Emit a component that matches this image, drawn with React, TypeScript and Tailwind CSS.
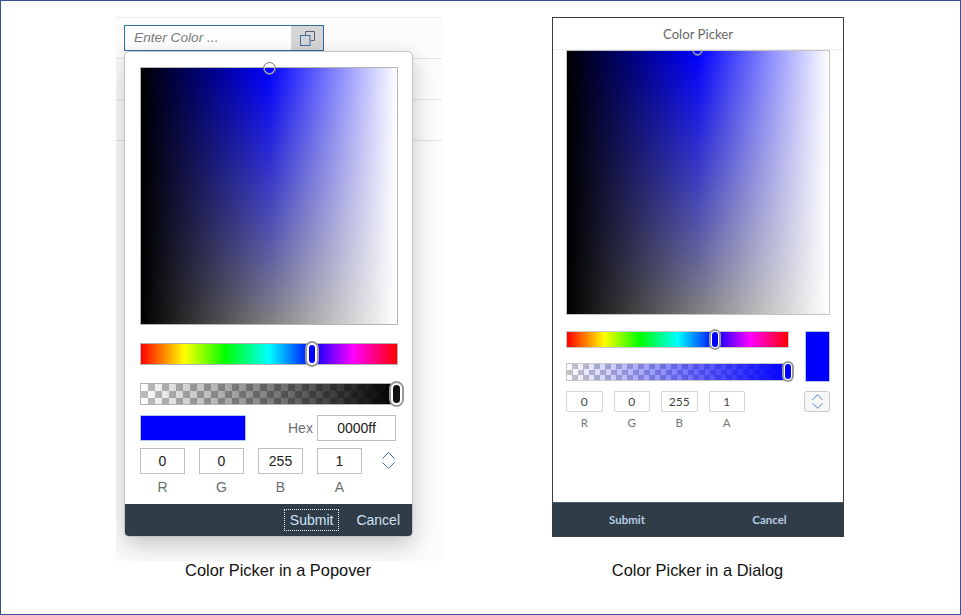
function Field({ className, handle }: { className: string; handle: string }) {
  return (
    <div className={`relative ${className}`}>
      <div className="h-full w-full bg-[linear-gradient(to_right,#000,#00f_50%,#fff)]" />
      <div className="absolute inset-0 bg-[linear-gradient(to_right,#000,#808080_50%,#fff)] [mask-image:linear-gradient(to_bottom,transparent,black)]" />
      <div className={`absolute rounded-full border border-[#777] shadow-[inset_0_0_0_1px_rgba(255,255,255,0.7)] ${handle}`} />
    </div>
  );
}

function Thumb({ className, fill, pad }: { className: string; fill: string; pad: string }) {
  return (
    <div className={`absolute rounded-full border-2 border-[#999] bg-white ${pad} ${className}`}>
      <div className={`h-full w-full rounded-full ${fill}`} />
    </div>
  );
}

function Chevrons({ size }: { size: number }) {
  return (
    <svg width={size} height={size + 4} viewBox="0 0 13 17" fill="none">
      <path d="M.5 6.5l6-6 6 6" stroke="#2f6cb5" strokeWidth="1" />
      <path d="M.5 10.5l6 6 6-6" stroke="#3f72b0" strokeWidth="1" />
    </svg>
  );
}

const FIELDS = [
  ["0", "R"],
  ["0", "G"],
  ["255", "B"],
  ["1", "A"],
];

function PopoverPicker() {
  return (
    <div className="absolute left-[8px] top-[35px] flex h-[486px] w-[289px] flex-col overflow-hidden rounded-[5px] border border-[#c4c4c4] bg-white shadow-[0_8px_24px_rgba(0,0,0,0.22)]">
      <div className="flex flex-1 flex-col px-[15px] pt-[15px]">
        <Field className="h-[258px] w-[258px] border border-[#b5b5b5]" handle="left-[122px] top-[-6px] h-[13px] w-[13px]" />
        <div className="relative mt-[18px] h-[22px] w-[258px] border border-[#b5b5b5] bg-[linear-gradient(to_right,#f00,#ff0_17%,#0f0_33%,#0ff_50%,#00f_67%,#f0f_83%,#f00)]">
          <Thumb className="left-[164px] top-[-3px] h-[26px] w-[14px]" fill="bg-[#0000ff]" pad="p-[2px]" />
        </div>
        <div className="relative mt-[18px] h-[22px] w-[258px] border border-[#b5b5b5] bg-[repeating-conic-gradient(#bdbdbd_0_25%,#ffffff_0_50%)] bg-[length:14px_14px]">
          <div className="absolute inset-0 bg-[linear-gradient(to_right,rgba(0,0,0,0),#000)]" />
          <Thumb className="left-[248px] top-[-3px] h-[26px] w-[15px]" fill="bg-[#111]" pad="p-[2px]" />
        </div>
        <div className="mt-[10px] flex items-center">
          <div className="h-[26px] w-[106px] border border-[#b5c5ee] bg-[#0000ff]" />
          <span className="ml-[42px] w-[29px] text-[14px] text-[#6a6d70]">Hex</span>
          <div className="flex h-[26px] w-[79px] items-center justify-center border border-[#bfbfbf] text-[14px] text-[#222]">
            0000ff
          </div>
        </div>
        <div className="mt-[7px] flex items-start gap-[14px]">
          {FIELDS.map(([v, l]) => (
            <div key={l} className="flex w-[45px] flex-col items-center">
              <div className="flex h-[26px] w-[45px] items-center justify-center border border-[#bfbfbf] text-[14px] text-[#222]">
                {v}
              </div>
              <span className="mt-[3px] text-[14px] leading-[20px] text-[#6a6d70]">{l}</span>
            </div>
          ))}
          <div className="ml-[6px] mt-[4px] flex">
            <Chevrons size={13} />
          </div>
        </div>
      </div>
      <div className="flex h-[32px] items-center justify-end bg-[#303c47] text-[14px] text-[#cfe3f5]">
        <span className="mr-[17px] border border-dotted border-white px-[5px] py-[1px] leading-[18px]">Submit</span>
        <span className="mr-[12px]">Cancel</span>
      </div>
    </div>
  );
}

function DialogPicker() {
  return (
    <div className="flex h-[520px] w-[292px] flex-col border border-[#3c3c3c] bg-white">
      <div className="flex h-[32px] items-center justify-center border-b border-[#ededed] pt-[3px] font-['Lato',sans-serif] text-[13.2px] text-[#666]">
        Color Picker
      </div>
      <div className="flex-1 px-[13px]">
        <Field
          className="h-[265px] w-[264px] overflow-hidden border border-[#c4c4c4]"
          handle="left-[125px] top-[-6px] h-[11px] w-[11px]"
        />
        <div className="mt-[16px] flex">
          <div className="w-[223px]">
            <div className="relative h-[17px] border border-[#c8c8c8] bg-[linear-gradient(to_right,#f00,#ff0_17%,#0f0_33%,#0ff_50%,#00f_67%,#f0f_83%,#f00)]">
              <Thumb className="left-[142px] top-[-3px] h-[21px] w-[12px]" fill="bg-[#0000ff]" pad="p-[1px]" />
            </div>
            <div className="relative mt-[15px] h-[18px] border border-[#c8c8c8] bg-[repeating-conic-gradient(#c4c4c4_0_25%,#ffffff_0_50%)] bg-[length:11px_11px]">
              <div className="absolute inset-0 bg-[linear-gradient(to_right,rgba(0,0,255,0),#00f)]" />
              <Thumb className="left-[215px] top-[-3px] h-[21px] w-[12px]" fill="bg-[#0000ff]" pad="p-[1px]" />
            </div>
          </div>
          <div className="ml-[16px] h-[51px] w-[25px] border border-[#b5c5ee] bg-[#0000ff]" />
        </div>
        <div className="mt-[9px] flex items-start gap-[11px]">
          {FIELDS.map(([v, l]) => (
            <div key={l} className="flex w-[36.5px] flex-col items-center">
              <div className="flex h-[21px] w-full items-center justify-center rounded-[1px] border border-[#d4d4d4] font-['Lato',sans-serif] text-[12px] text-[#444]">
                {v}
              </div>
              <span className="mt-[4px] font-['Lato',sans-serif] text-[11.5px] leading-[14px] text-[#777]">{l}</span>
            </div>
          ))}
          <div className="ml-[48px] flex h-[21px] w-[26px] shrink-0 items-center justify-center rounded-[3px] border border-[#c8c8c8] bg-[#f7f7f7]">
            <Chevrons size={11} />
          </div>
        </div>
      </div>
      <div className="flex h-[34px] items-center border-t border-[#4f5f6e] bg-[#303c47] font-['Lato',sans-serif] text-[11.5px] font-bold text-[#b6cde2]">
        <span className="w-[148px] text-center">Submit</span>
        <span className="w-[137px] text-center">Cancel</span>
      </div>
    </div>
  );
}

export default function App() {
  return (
    <div className="flex h-[615px] w-[961px] border border-[#2f5597] bg-white font-['Liberation_Sans',sans-serif]">
      <div className="ml-[115px] mt-[15px] flex w-[326px] flex-col">
        <div className="relative h-[545px] overflow-hidden bg-[#fcfcfc]">
          <div className="mt-[1px] h-[1px] bg-[#ebebeb]" />
          <div className="mt-[40px] h-[1px] bg-[#e4e4e4]" />
          <div className="mt-[40px] h-[1px] bg-[#e4e4e4]" />
          <div className="mt-[40px] h-[1px] bg-[#e0e0e0]" />
          <div className="absolute left-[8px] top-[9px] flex h-[26px] w-[200px] items-center border border-[#2e6c9e] bg-white">
            <span className="flex-1 pl-[9px] pt-[1px] text-[13.7px] italic text-[#7b7b7b]">Enter Color ...</span>
            <div className="flex h-full w-[32px] items-center justify-center bg-[#d6d6d6]">
              <svg width="15" height="15" viewBox="0 0 15 15" fill="none">
                <path d="M5.5 4V.5h9v9H11" stroke="#5f5f80" />
                <rect x=".5" y="4.5" width="9.5" height="10" stroke="#3a6ea5" />
              </svg>
            </div>
          </div>
          <PopoverPicker />
        </div>
        <div className="mt-[-1px] pr-[2px] text-center text-[16.4px] leading-[20px] text-[#111]">Color Picker in a Popover</div>
      </div>
      <div className="ml-[110px] mt-[16px] flex flex-col">
        <DialogPicker />
        <div className="mt-[23px] pr-[1px] text-center text-[16.4px] leading-[20px] text-[#111]">Color Picker in a Dialog</div>
      </div>
    </div>
  );
}
